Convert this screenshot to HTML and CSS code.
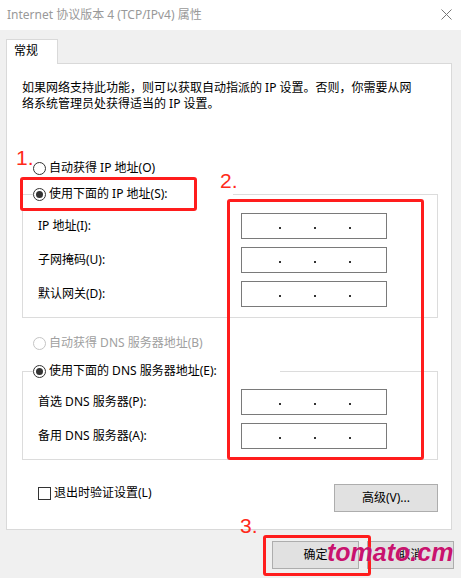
FILE: index.html
```html
<!DOCTYPE html>
<html lang="zh-CN">
<head>
    <meta charset="UTF-8">
    <meta name="viewport" content="width=device-width, initial-scale=1.0">
    <title>Internet 协议版本 4 (TCP/IPv4) 属性</title>
    <link rel="stylesheet" href="styles.css">
</head>
<body>
    <div class="window">
        <div class="titlebar">
            <span class="title">Internet 协议版本 4 (TCP/IPv4) 属性</span>
            <svg class="close" width="11" height="11" viewBox="0 0 11 11">
                <path d="M0.5 0.5 L10.5 10.5 M10.5 0.5 L0.5 10.5" stroke="#777" stroke-width="1" fill="none"/>
            </svg>
        </div>

        <div class="dialog">
            <div class="tabs">
                <div class="tab">常规</div>
            </div>
            <div class="panel">
                <p class="desc">如果网络支持此功能，则可以获取自动指派的 IP 设置。否则，你需要从网<br>络系统管理员处获得适当的 IP 设置。</p>

                <div class="radio first-radio"><span class="circle"></span>自动获得 IP 地址(O)</div>

                <fieldset class="group group-ip">
                    <legend class="radio legend-ip"><span class="circle checked"></span>使用下面的 IP 地址(S):</legend>
                    <div class="field-row"><span>IP 地址(I):</span><div class="ip-box"><i></i><i></i><i></i></div></div>
                    <div class="field-row"><span>子网掩码(U):</span><div class="ip-box"><i></i><i></i><i></i></div></div>
                    <div class="field-row"><span>默认网关(D):</span><div class="ip-box"><i></i><i></i><i></i></div></div>
                </fieldset>

                <div class="radio disabled"><span class="circle"></span>自动获得 DNS 服务器地址(B)</div>

                <fieldset class="group group-dns">
                    <legend class="radio legend-dns"><span class="circle checked"></span>使用下面的 DNS 服务器地址(E):</legend>
                    <div class="field-row"><span>首选 DNS 服务器(P):</span><div class="ip-box"><i></i><i></i><i></i></div></div>
                    <div class="field-row"><span>备用 DNS 服务器(A):</span><div class="ip-box"><i></i><i></i><i></i></div></div>
                </fieldset>

                <div class="bottom-row">
                    <div class="check"><span class="box"></span>退出时验证设置(L)</div>
                    <button class="btn btn-adv">高级(V)...</button>
                </div>
            </div>

            <div class="footer">
                <button class="btn">确定</button>
                <button class="btn">取消</button>
            </div>
        </div>

        <!-- annotations drawn over the dialog -->
        <div class="mark mark-1">1.</div>
        <div class="mark mark-2">2.</div>
        <div class="mark mark-3">3.</div>
        <div class="red-box box-1"></div>
        <div class="red-box box-2"></div>
        <div class="red-box box-3"></div>
        <div class="watermark">tomato.cm</div>
    </div>
</body>
</html>
```

FILE: styles.css
```css
body {
    margin: 0;
    background: #f0f0f0;
    font-family: "Noto Sans", "Noto Sans CJK SC", sans-serif;
    font-size: 12px;
    line-height: 16px;
    color: #000;
}
.window {
    position: relative;
    width: 461px;
    height: 578px;
    overflow: hidden;
}
.titlebar {
    height: 30px;
    background: #fff;
    display: flex;
    align-items: center;
    justify-content: space-between;
    padding: 0 9px 0 7px;
}
.title {
    color: #999;
}
.close {
    display: block;
    margin-top: -2px;
}

.dialog {
    padding: 9px 0 0 6px;
}
.tabs {
    display: flex;
    height: 24px;
}
.tab {
    position: relative;
    z-index: 1;
    width: 52px;
    height: 25px;
    box-sizing: border-box;
    background: #fff;
    border: 1px solid #d9d9d9;
    border-bottom: none;
    padding: 3px 0 0 7px;
}
.panel {
    width: 446px;
    height: 467px;
    box-sizing: border-box;
    background: #fff;
    border: 1px solid #d9d9d9;
    padding: 16px 0 0 15px;
}
.desc {
    margin: 0;
    white-space: nowrap;
}

.radio {
    display: flex;
    align-items: center;
    gap: 3px;
    height: 16px;
    margin-left: 11px;
}
.first-radio {
    margin-top: 48px;
}
.circle {
    width: 13px;
    height: 13px;
    box-sizing: border-box;
    border: 1px solid #333;
    border-radius: 50%;
    background: #fff;
    display: flex;
    align-items: center;
    justify-content: center;
}
.circle.checked::after {
    content: "";
    width: 7px;
    height: 7px;
    border-radius: 50%;
    background: #333;
}
.radio.disabled {
    color: #a0a0a0;
    margin-top: 17px;
}
.radio.disabled .circle {
    border-color: #c4c4c4;
}

.group {
    width: 416px;
    box-sizing: border-box;
    margin: 0;
    padding: 0;
    border: 1px solid #dcdcdc;
    min-inline-size: 0;
}
.group legend {
    padding: 0;
    margin-left: 10px;
    background: #fff;
}
.group-ip {
    margin-top: 10px;
    padding: 11px 0 10px;
}
.legend-ip {
    width: 200px;
}
.group-dns {
    margin-top: 12px;
    padding: 10px 0 10px;
}
.legend-dns {
    width: 247px;
}
.field-row {
    display: grid;
    grid-template-columns: 203px 146px;
    align-items: center;
    padding-left: 15px;
    height: 26px;
}
.field-row + .field-row {
    margin-top: 8px;
}
.ip-box {
    height: 26px;
    box-sizing: border-box;
    border: 1px solid #7a7a7a;
    display: flex;
    align-items: center;
    gap: 33px;
    padding: 3px 0 0 37px;
}
.ip-box i {
    width: 2px;
    height: 2px;
    background: #333;
}

.bottom-row {
    width: 416px;
    display: flex;
    justify-content: space-between;
    align-items: flex-start;
    margin-top: 24px;
}
.check {
    display: flex;
    align-items: center;
    gap: 3px;
    margin: 1px 0 0 16px;
}
.box {
    width: 13px;
    height: 13px;
    box-sizing: border-box;
    border: 1px solid #333;
    background: #fff;
}

.btn {
    font-family: inherit;
    font-size: 12px;
    line-height: 16px;
    color: #000;
    height: 28px;
    box-sizing: border-box;
    background: #e1e1e1;
    border: 1px solid #adadad;
    border-radius: 0;
    padding: 0;
    cursor: pointer;
}
.btn-adv {
    width: 104px;
}
.footer {
    display: flex;
    justify-content: flex-end;
    gap: 8px;
    margin-top: 11px;
    padding-right: 7px;
}
.footer .btn {
    width: 87px;
}

/* red annotations */
.mark {
    position: absolute;
    font-family: "Liberation Sans", sans-serif;
    font-size: 21px;
    line-height: 21px;
    color: #ff2a1a;
}
.mark-1 { left: 16px; top: 147px; }
.mark-2 { left: 220px; top: 170px; }
.mark-3 { left: 240px; top: 515px; }
.red-box {
    position: absolute;
    box-sizing: border-box;
    border: 3px solid #ff1d1d;
    border-radius: 3px;
}
.box-1 { left: 20px; top: 177px; width: 177px; height: 34px; }
.box-2 { left: 227px; top: 199px; width: 197px; height: 261px; }
.box-3 { left: 263px; top: 535px; width: 108px; height: 41px; }
.watermark {
    position: absolute;
    left: 327px;
    top: 540px;
    font-family: "Liberation Sans", sans-serif;
    font-weight: bold;
    font-style: italic;
    font-size: 25px;
    line-height: 25px;
    color: #c8136e;
    text-shadow: 0 0 1px rgba(255, 255, 255, 0.6);
}
```
